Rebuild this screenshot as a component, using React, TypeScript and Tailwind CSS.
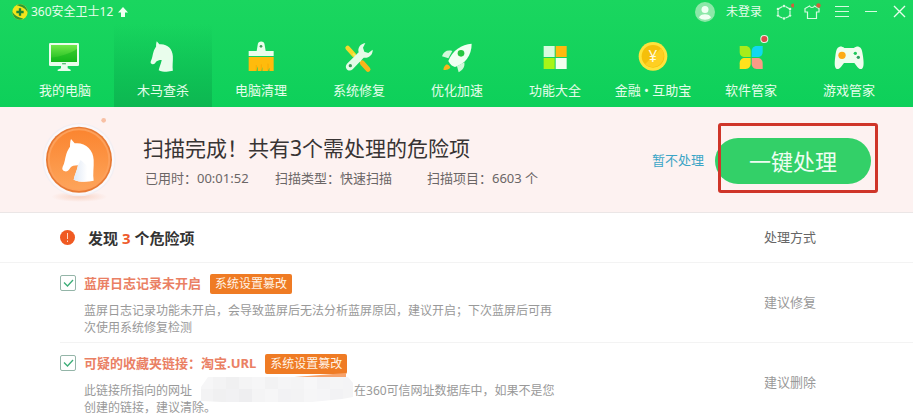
import type { ReactNode } from "react";

const HORSE =
  "M123 87L134 100C165 96 190 118 191 150C192 172 188 192 191 212C172 217 148 217 131 209C134 196 140 184 144 166C132 166 126 168 121 173C117 180 112 185 105 184C98 182 95 178 98 170C104 160 105 145 109 132C112 122 116 116 120 110C120 100 121 93 123 87Z";

function NavIcon({ children }: { children: ReactNode }) {
  return (
    <svg viewBox="0 0 120 120" className="h-10 w-10 overflow-visible" aria-hidden="true">
      {children}
    </svg>
  );
}

const navItems: { label: string; active?: boolean; icon: ReactNode }[] = [
  {
    label: "我的电脑",
    icon: (
      <NavIcon>
        <defs>
          <linearGradient id="screen" x1="0" y1="0" x2="0" y2="1">
            <stop offset="0" stopColor="#6fe84a" />
            <stop offset="1" stopColor="#17b81c" />
          </linearGradient>
        </defs>
        <rect x="12" y="18" width="90" height="69" rx="4" fill="#e9fdec" />
        <rect x="18" y="24" width="78" height="51" fill="url(#screen)" />
        <path d="M18 62C45 60 75 50 96 36V75H18Z" fill="#10b51c" opacity=".5" />
        <rect x="51" y="79" width="12" height="3" rx="1" fill="#2aa84c" />
        <path d="M48 87H68V94L77 98V102H38V98L48 94Z" fill="#e9fdec" />
      </NavIcon>
    ),
  },
  {
    label: "木马查杀",
    active: true,
    icon: (
      <NavIcon>
        <g transform="translate(-46 -49) scale(.71)">
          <path d={HORSE} fill="#e9fdec" />
        </g>
      </NavIcon>
    ),
  },
  {
    label: "电脑清理",
    icon: (
      <NavIcon>
        <path d="M50 24C50 10 71 10 71 24L74 42H98V57H23V42H47Z" fill="#e9fdec" />
        <circle cx="60" cy="28" r="4" fill="#3b9c57" />
        <path d="M23 60H98V102H85V92L81 102H64V90L61 102H50V88L46 102H23Z" fill="#ffbb0c" />
        <path d="M46 84V102M61 82V102M81 80V102" stroke="#f5a500" strokeWidth="2" />
      </NavIcon>
    ),
  },
  {
    label: "系统修复",
    icon: (
      <NavIcon>
        <path d="M26 33L45 54" stroke="#f6d82a" strokeWidth="14" strokeLinecap="round" />
        <path d="M42 50L70 78" stroke="#e8f060" strokeWidth="6" />
        <path d="M70 78L87 97" stroke="#f9b41a" strokeWidth="15" strokeLinecap="round" />
        <path
          d="M79 18C64 20 55 33 59 46L24 80C14 92 28 108 41 97L74 62C88 65 102 54 101 38L88 48L76 44L72 32Z"
          fill="#e4fbe8"
        />
        <circle cx="34" cy="86" r="5" fill="#3b9c57" />
      </NavIcon>
    ),
  },
  {
    label: "优化加速",
    icon: (
      <NavIcon>
        <path d="M46 42C30 38 20 44 15 58L34 64Z" fill="#d2f8da" />
        <path d="M82 76C84 90 78 98 65 106L60 88Z" fill="#d2f8da" />
        <path d="M104 20C74 22 46 40 34 72C40 84 46 88 54 90C84 80 104 56 104 20Z" fill="#f0fff2" />
        <circle cx="72" cy="49" r="10" fill="#27c640" />
        <path d="M26 84C32 80 38 86 40 92C34 98 26 100 19 98C20 92 22 88 26 84Z" fill="#f9b41a" />
      </NavIcon>
    ),
  },
  {
    label: "功能大全",
    icon: (
      <NavIcon>
        <rect x="26" y="27" width="33" height="33" fill="#d8fbdf" />
        <rect x="62" y="27" width="33" height="33" fill="#ffb90f" />
        <rect x="26" y="63" width="33" height="33" fill="#a8f517" />
        <rect x="62" y="63" width="33" height="33" fill="#f2fff0" />
      </NavIcon>
    ),
  },
  {
    label: "金融 • 互助宝",
    icon: (
      <NavIcon>
        <circle cx="60" cy="58" r="43" fill="#ffe23c" />
        <circle cx="60" cy="58" r="34" fill="#f5bf0a" />
        <path d="M36 82A34 34 0 0 0 84 34" fill="#ffcf22" />
        <text x="60" y="75" textAnchor="middle" fontSize="46" fill="#fffbe0">
          ¥
        </text>
      </NavIcon>
    ),
  },
  {
    label: "软件管家",
    icon: (
      <NavIcon>
        <path d="M26 27H44C54 27 59 34 59 44V60H42C32 60 26 54 26 44Z" fill="#a8ec1a" />
        <path d="M95 27H77C67 27 62 34 62 44V60H79C89 60 95 54 95 44Z" fill="#10d8f0" />
        <path d="M26 96H44C54 96 59 89 59 79V63H42C32 63 26 69 26 79Z" fill="#ffe21c" />
        <path d="M95 96H77C67 96 62 89 62 79V63H79C89 63 95 69 95 79Z" fill="#fb9a86" />
        <circle cx="100" cy="6" r="12" fill="#e6f7e2" />
        <circle cx="100" cy="6" r="9" fill="#dd4b4b" />
      </NavIcon>
    ),
  },
  {
    label: "游戏管家",
    icon: (
      <NavIcon>
        <path
          d="M32 29C37 28 42 30 46 33H75C79 30 84 28 89 29C98 31 100 42 102 58C104 74 106 92 98 96C88 98 83 86 76 78H45C38 86 33 98 23 96C15 92 17 74 19 58C21 42 23 31 32 29Z"
          fill="#effdee"
        />
        <circle cx="39" cy="55" r="11" fill="#fdab13" />
        <circle cx="79" cy="49" r="5" fill="#1fc95a" />
        <circle cx="88" cy="61" r="5" fill="#2f9e60" />
      </NavIcon>
    ),
  },
];

function TitleBar() {
  return (
    <div className="flex h-6 items-center justify-between pl-3 pr-1 text-xs text-[#e6fdeb]">
      <div className="flex items-center gap-[3px]">
        <svg viewBox="0 0 48 48" className="h-4 w-4" aria-hidden="true">
          <circle cx="24" cy="24" r="23" fill="#f2e41c" />
          <path d="M14 4C30 -5 47 8 47 26C42 14 30 8 14 4Z" fill="#2d9a35" />
          <path d="M34 44C18 53 1 40 1 22C6 34 18 40 34 44Z" fill="#2d9a35" />
          <path d="M24 13V35M13 24H35" stroke="#1c8534" strokeWidth="7" />
        </svg>
        <span>360安全卫士12</span>
        <svg viewBox="0 0 12 12" className="ml-px h-3 w-3" aria-hidden="true">
          <path d="M6 1L11 6.500H8V11H4V6.500H1Z" fill="#effff2" />
        </svg>
      </div>
      <div className="flex items-center">
        <svg viewBox="0 0 20 20" className="h-5 w-5" aria-hidden="true">
          <circle cx="10" cy="10" r="10" fill="#8ce8a8" />
          <circle cx="10" cy="7.5" r="3.5" fill="#f0fff3" />
          <path d="M4 15.5C5 11 15 11 16 15.5C13 18.500 7 18.500 4 15.500Z" fill="#f0fff3" />
        </svg>
        <button className="ml-[11px]">未登录</button>
        <button aria-label="勋章" className="ml-3">
          <svg viewBox="0 0 20 20" className="h-5 w-5" fill="none" stroke="#d6fbe0" strokeWidth="1.200">
            <path d="M8.500 4.500L5 6.500M4 8.500V12M5 14.500L8.500 16M11.500 16L15 14.500M16 12V8.500M15 6.500L11.500 4.500" />
            <g fill="#d6fbe0" stroke="none">
              <circle cx="10" cy="4" r="1.300" />
              <circle cx="4" cy="13.500" r="1.300" />
              <circle cx="16" cy="13.500" r="1.300" />
              <circle cx="10" cy="16.500" r="1.300" />
              <circle cx="4" cy="7" r="1.300" />
              <circle cx="16" cy="7" r="1.300" />
            </g>
            <circle cx="19" cy="3.500" r="2" fill="#d0603c" stroke="none" />
          </svg>
        </button>
        <button aria-label="换肤" className="ml-2">
          <svg viewBox="0 0 20 20" className="h-5 w-5" fill="none" stroke="#d6fbe0" strokeWidth="1.200">
            <path d="M7.500 4C8.500 6 11.500 6 12.500 4L17 6.500V10H14.500V16.500H5.500V10H3V6.500Z" />
            <circle cx="16.500" cy="3.500" r="2.200" fill="#d0603c" stroke="none" />
          </svg>
        </button>
        <button aria-label="主菜单" className="ml-[10px]">
          <svg viewBox="0 0 20 20" className="h-5 w-5" stroke="#d6fbe0">
            <path d="M3 4.500H17M3 9.500H17M3 14.500H17" />
          </svg>
        </button>
        <button aria-label="最小化" className="ml-[9px]">
          <svg viewBox="0 0 20 20" className="h-5 w-5" stroke="#d6fbe0">
            <path d="M4 9.500H16" />
          </svg>
        </button>
        <button aria-label="关闭" className="ml-2">
          <svg viewBox="0 0 20 20" className="h-5 w-5" stroke="#e6fdeb" strokeWidth="1.400">
            <path d="M5 4L16 15M16 4L5 15" />
          </svg>
        </button>
      </div>
    </div>
  );
}

function Banner() {
  return (
    <section className="flex h-[106px] items-center border-b border-[#ebe6e6] bg-[#fdf2f1] pl-[30px] pr-[42px]">
      <svg viewBox="0 0 300 300" className="h-[100px] w-[100px] shrink-0" aria-hidden="true">
        <defs>
          <linearGradient id="disc" x1="0" y1="0" x2="0" y2="1">
            <stop offset="0" stopColor="#fb8530" />
            <stop offset="1" stopColor="#fda45a" />
          </linearGradient>
          <radialGradient id="shade">
            <stop offset="0" stopColor="#f8d3c4" />
            <stop offset="1" stopColor="#fdf2f1" />
          </radialGradient>
          <linearGradient id="neck" x1="0" y1="0" x2="1" y2="0">
            <stop offset="0" stopColor="#dfe8f5" />
            <stop offset="1" stopColor="#ffffff" />
          </linearGradient>
        </defs>
        <ellipse cx="148" cy="260" rx="84" ry="16" fill="url(#shade)" />
        <circle cx="147" cy="149" r="110" fill="#f3eff3" />
        <circle cx="147" cy="149" r="106" fill="#fbf8fa" />
        <circle cx="147" cy="149" r="99" fill="#e77a34" />
        <circle cx="147" cy="149" r="94" fill="#fda05a" />
        <circle cx="147" cy="149" r="88" fill="url(#disc)" />
        <path d={HORSE} fill="#ffffff" />
        <path d="M144 166L152 150L172 168V214C158 215 142 214 131 209C134 196 140 184 144 166Z" fill="url(#neck)" />
        <circle cx="221" cy="31" r="7" fill="#f8c0a4" />
      </svg>
      <div className="ml-[13px] grow">
        <h1 className="text-[21px] leading-8 text-[#383434]">扫描完成！共有3个需处理的危险项</h1>
        <div className="mt-1 flex pl-[2px] text-[13px] leading-5 text-[#6b6666]">
          <span className="w-[130px]">已用时：00:01:52</span>
          <span className="w-[152px]">扫描类型：快速扫描</span>
          <span>扫描项目：6603 个</span>
        </div>
      </div>
      <div className="flex items-center pt-[3px]">
        <a href="#skip" className="text-[13px] text-[#3ba5c6]">
          暂不处理
        </a>
        <div className="relative ml-[11px]">
          <button className="block h-[46px] w-[156px] rounded-full bg-[#33d068] text-[22px] text-[#eefdf1]">
            一键处理
          </button>
          <div className="pointer-events-none absolute -bottom-[9px] -right-[7px] -top-[15px] left-[3px] rounded-[3px] border-[3px] border-[#cf3529]" />
        </div>
      </div>
    </section>
  );
}

const MOSAIC = [
  "#f6f6f7", "#f3f3f4", "#f0f0f1", "#f4f4f5", "#f6f6f7", "#f2f2f3", "#f5f5f6", "#f4f4f5", "#f7f7f8", "#f3f3f5", "#f5f5f6", "#f4f4f6",
  "#f3f3f4", "#f0f0f1", "#f1f1f3", "#eeeef0", "#f4f4f5", "#f6f6f7", "#f2f2f4", "#f3f3f4", "#f6f6f7", "#f5f5f7", "#f2f2f4", "#f4f4f5",
];

function HiddenAddress() {
  return (
    <span className="relative inline-block h-3 w-[162px]">
      <svg viewBox="0 0 162 32" className="absolute -top-[10px] left-0 h-8 w-[162px]" aria-hidden="true">
        <path d="M96 4.500L154 0V5Z" fill="#f7a36c" />
        <clipPath id="patch">
          <path d="M16 4H156L161 10V24L150 26L120 29H30L9 28V14Z" />
        </clipPath>
        <g clipPath="url(#patch)">
          {MOSAIC.map((fill, i) => (
            <rect key={i} x={(i % 12) * 13 + 8} y={i < 12 ? 4 : 16} width="13" height="13" fill={fill} />
          ))}
        </g>
      </svg>
    </span>
  );
}

const risks: { id: string; title: string; detail: ReactNode; action: string }[] = [
  {
    id: "bluescreen",
    title: "蓝屏日志记录未开启",
    detail: "蓝屏日志记录功能未开启，会导致蓝屏后无法分析蓝屏原因，建议开启；下次蓝屏后可再次使用系统修复检测",
    action: "建议修复",
  },
  {
    id: "favorite",
    title: "可疑的收藏夹链接：淘宝.URL",
    detail: (
      <>
        <span>此链接所指向的网址</span>
        <HiddenAddress />
        <span>在360可信网址数据库中，如果不是您</span>
        <br />
        <span>创建的链接，建议清除。</span>
      </>
    ),
    action: "建议删除",
  },
];

function RiskTable() {
  return (
    <table className="w-full border-collapse text-left">
      <thead>
        <tr className="border-b border-[#f3f3f3]">
          <th scope="col" className="h-[49px] pl-[60px] pt-px">
            <div className="flex items-center gap-[13px] text-[15px] text-[#333]">
              <svg viewBox="0 0 15 15" className="h-[15px] w-[15px]" aria-hidden="true">
                <circle cx="7.500" cy="7.500" r="7.500" fill="#f05a22" />
                <path d="M7.500 3V9M7.500 10.500V12" stroke="#ffd9c4" />
              </svg>
              <span>
                发现 <span className="text-[#ee5a2c]">3</span> 个危险项
              </span>
            </div>
          </th>
          <th scope="col" className="w-[149px] pt-px text-[13px] font-normal text-[#666]">
            处理方式
          </th>
        </tr>
      </thead>
      <tbody>
        {risks.map((risk) => (
          <tr key={risk.id}>
            <td className="pl-[60px]">
              <div className="flex h-20 gap-2 border-b border-[#f3f3f3] pt-[11px]">
                <span className="relative mt-px h-4 w-4 shrink-0">
                  <input
                    id={risk.id}
                    type="checkbox"
                    defaultChecked
                    className="peer block h-4 w-4 appearance-none rounded-[2px] border border-[#94b5a8] bg-white"
                  />
                  <svg
                    viewBox="0 0 16 16"
                    className="pointer-events-none absolute inset-0 hidden h-4 w-4 peer-checked:block"
                    fill="none"
                    stroke="#3dae78"
                    strokeWidth="1.300"
                    aria-hidden="true"
                  >
                    <path d="M4 7.500L7.500 11L13 5" />
                  </svg>
                </span>
                <div>
                  <div className="flex h-5 items-center gap-[9px]">
                    <label htmlFor={risk.id} className="text-[13px] font-bold text-[#ea8064]">
                      {risk.title}
                    </label>
                    <span className="rounded-[2px] bg-[#ef7b24] px-[5px] text-xs leading-5 text-[#fff3e6]">系统设置篡改</span>
                  </div>
                  <p className="mt-2 w-[476px] text-xs leading-[17px] text-[#999]">{risk.detail}</p>
                </div>
              </div>
            </td>
            <td className="text-[13px] text-[#999]">
              <div className="flex h-20 items-center border-b border-[#f3f3f3] pt-[2px]">{risk.action}</div>
            </td>
          </tr>
        ))}
      </tbody>
    </table>
  );
}

export default function App() {
  return (
    <div className="h-screen overflow-hidden bg-white font-['Noto_Sans','Noto_Sans_CJK_SC',sans-serif]">
      <header className="bg-linear-to-b from-[#1ad65f] to-[#0dd05a]">
        <TitleBar />
        <nav className="flex pl-4 pr-[15px]">
          {navItems.map((item) => (
            <a
              key={item.label}
              href={`#${item.label}`}
              aria-current={item.active ? "page" : undefined}
              className={`flex h-[83px] flex-1 flex-col items-center pt-[13px] ${
                item.active ? "bg-linear-to-b from-transparent to-[#0db751]" : ""
              }`}
            >
              {item.icon}
              <span className="mt-[3px] whitespace-nowrap text-[13px] leading-5 text-[#e6fdeb]">{item.label}</span>
            </a>
          ))}
        </nav>
      </header>
      <main>
        <Banner />
        <RiskTable />
      </main>
    </div>
  );
}
